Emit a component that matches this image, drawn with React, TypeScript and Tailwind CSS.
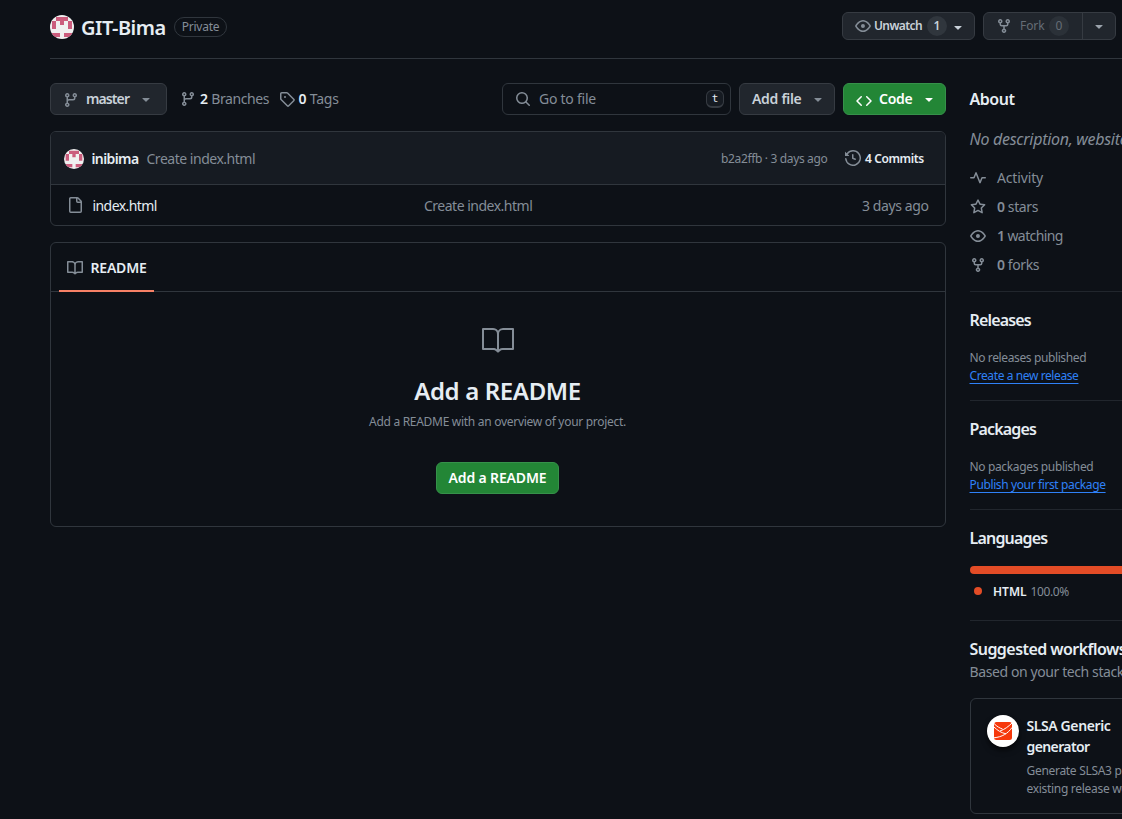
import React from "react";

const paths = {
  branch:
    "M9.5 3.25a2.25 2.25 0 1 1 3 2.122V6A2.5 2.5 0 0 1 10 8.5H6a1 1 0 0 0-1 1v1.128a2.251 2.251 0 1 1-1.5 0V5.372a2.25 2.25 0 1 1 1.5 0v1.836A2.493 2.493 0 0 1 6 7h4a1 1 0 0 0 1-1v-.628A2.25 2.25 0 0 1 9.5 3.25Zm-6 0a.75.75 0 1 0 1.5 0 .75.75 0 0 0-1.5 0Zm8.25-.75a.75.75 0 1 0 0 1.5.75.75 0 0 0 0-1.5ZM4.25 12a.75.75 0 1 0 0 1.5.75.75 0 0 0 0-1.5Z",
  tag: "M1 7.775V2.75C1 1.784 1.784 1 2.75 1h5.025c.464 0 .91.184 1.238.513l6.25 6.25a1.75 1.75 0 0 1 0 2.474l-5.026 5.026a1.75 1.75 0 0 1-2.474 0l-6.25-6.25A1.752 1.752 0 0 1 1 7.775Zm1.5 0c0 .066.026.13.073.177l6.25 6.25a.25.25 0 0 0 .354 0l5.025-5.025a.25.25 0 0 0 0-.354l-6.25-6.25a.25.25 0 0 0-.177-.073H2.75a.25.25 0 0 0-.25.25ZM6 5a1 1 0 1 1 0 2 1 1 0 0 1 0-2Z",
  search:
    "M10.68 11.74a6 6 0 0 1-7.922-8.982 6 6 0 0 1 8.982 7.922l3.04 3.04a.749.749 0 0 1-.326 1.275.749.749 0 0 1-.734-.215ZM11.5 7a4.499 4.499 0 1 0-8.997 0A4.499 4.499 0 0 0 11.5 7Z",
  code: "m11.28 3.22 4.25 4.25a.75.75 0 0 1 0 1.06l-4.25 4.25a.749.749 0 0 1-1.275-.326.749.749 0 0 1 .215-.734L13.94 8l-3.72-3.72a.749.749 0 0 1 .326-1.275.749.749 0 0 1 .734.215Zm-6.56 0a.751.751 0 0 1 1.042.018.751.751 0 0 1 .018 1.042L2.06 8l3.72 3.72a.749.749 0 0 1-.326 1.275.749.749 0 0 1-.734-.215L.47 8.53a.75.75 0 0 1 0-1.06Z",
  caret:
    "m4.427 7.427 3.396 3.396a.25.25 0 0 0 .354 0l3.396-3.396A.25.25 0 0 0 11.396 7H4.604a.25.25 0 0 0-.177.427Z",
  eye: "M8 2c1.981 0 3.671.992 4.933 2.078 1.27 1.091 2.187 2.345 2.637 3.023a1.62 1.62 0 0 1 0 1.798c-.45.678-1.367 1.932-2.637 3.023C11.67 13.008 9.981 14 8 14c-1.981 0-3.671-.992-4.933-2.078C1.797 10.83.88 9.576.43 8.898a1.62 1.62 0 0 1 0-1.798c.45-.677 1.367-1.931 2.637-3.022C4.33 2.992 6.019 2 8 2ZM1.679 7.932a.12.12 0 0 0 0 .136c.411.622 1.241 1.75 2.366 2.717C5.176 11.758 6.527 12.5 8 12.5c1.473 0 2.825-.742 3.955-1.715 1.124-.967 1.954-2.096 2.366-2.717a.12.12 0 0 0 0-.136c-.412-.621-1.242-1.75-2.366-2.717C10.824 4.242 9.473 3.5 8 3.5c-1.473 0-2.825.742-3.955 1.715-1.124.967-1.954 2.096-2.366 2.717ZM8 10a2 2 0 1 1-.001-3.999A2 2 0 0 1 8 10Z",
  fork: "M5 5.372v.878c0 .414.336.75.75.75h4.5a.75.75 0 0 0 .75-.75v-.878a2.25 2.25 0 1 1 1.5 0v.878a2.25 2.25 0 0 1-2.25 2.25h-1.5v2.128a2.251 2.251 0 1 1-1.5 0V8.5h-1.5A2.25 2.25 0 0 1 3.5 6.25v-.878a2.25 2.25 0 1 1 1.5 0ZM5 3.25a.75.75 0 1 0-1.5 0 .75.75 0 0 0 1.5 0Zm6.75.75a.75.75 0 1 0 0-1.5.75.75 0 0 0 0 1.5Zm-3 8.75a.75.75 0 1 0-1.5 0 .75.75 0 0 0 1.5 0Z",
  history:
    "m.427 1.927 1.215 1.215a8.002 8.002 0 1 1-1.6 5.685.75.75 0 1 1 1.493-.154 6.5 6.5 0 1 0 1.18-4.458l1.358 1.358A.25.25 0 0 1 3.896 6H.25A.25.25 0 0 1 0 5.75V2.104a.25.25 0 0 1 .427-.177ZM7.75 4a.75.75 0 0 1 .75.75v2.992l2.028.812a.75.75 0 0 1-.557 1.392l-2.5-1A.751.751 0 0 1 7 8.25v-3.5A.75.75 0 0 1 7.75 4Z",
  file: "M2 1.75C2 .784 2.784 0 3.75 0h6.586c.464 0 .909.184 1.237.513l2.914 2.914c.329.328.513.773.513 1.237v9.586A1.75 1.75 0 0 1 13.25 16h-9.5A1.75 1.75 0 0 1 2 14.25Zm1.75-.25a.25.25 0 0 0-.25.25v12.5c0 .138.112.25.25.25h9.5a.25.25 0 0 0 .25-.25V6h-2.75A1.75 1.75 0 0 1 9 4.25V1.5Zm6.75.062V4.25c0 .138.112.25.25.25h2.688l-.011-.013-2.914-2.914-.013-.011Z",
  book: "M0 1.75A.75.75 0 0 1 .75 1h4.253c1.227 0 2.317.59 3 1.501A3.743 3.743 0 0 1 11.006 1h4.245a.75.75 0 0 1 .75.75v10.5a.75.75 0 0 1-.75.75h-4.507a2.25 2.25 0 0 0-1.591.659l-.622.621a.75.75 0 0 1-1.06 0l-.622-.621A2.25 2.25 0 0 0 5.258 13H.75a.75.75 0 0 1-.75-.75Zm7.251 10.324.004-5.073-.002-2.253A2.25 2.25 0 0 0 5.003 2.5H1.5v9h3.757a3.75 3.75 0 0 1 1.994.574ZM8.755 4.75l-.004 7.322a3.752 3.752 0 0 1 1.992-.572H14.5v-9h-3.495a2.25 2.25 0 0 0-2.25 2.25Z",
  pulse:
    "M6 2c.306 0 .582.187.696.471L10 10.731l1.304-3.26A.751.751 0 0 1 12 7h3.25a.75.75 0 0 1 0 1.5h-2.742l-1.812 4.528a.751.751 0 0 1-1.392 0L6 4.77 4.696 8.03A.75.75 0 0 1 4 8.5H.75a.75.75 0 0 1 0-1.5h2.742l1.812-4.529A.751.751 0 0 1 6 2Z",
  star: "M8 .25a.75.75 0 0 1 .673.418l1.882 3.815 4.21.612a.75.75 0 0 1 .416 1.279l-3.046 2.97.719 4.192a.751.751 0 0 1-1.088.791L8 12.347l-3.766 1.98a.75.75 0 0 1-1.088-.79l.72-4.194L.818 6.374a.75.75 0 0 1 .416-1.28l4.21-.611L7.327.668A.75.75 0 0 1 8 .25Zm0 2.445L6.615 5.5a.75.75 0 0 1-.564.41l-3.097.45 2.24 2.184a.75.75 0 0 1 .216.664l-.528 3.084 2.769-1.456a.75.75 0 0 1 .698 0l2.77 1.456-.53-3.084a.75.75 0 0 1 .216-.664l2.24-2.183-3.096-.45a.75.75 0 0 1-.564-.41L8 2.694Z",
};

function Icon({ name, className = "", fill = "fill-[#848d97]" }: { name: keyof typeof paths; className?: string; fill?: string }) {
  return (
    <svg viewBox="0 0 16 16" className={`size-4 shrink-0 ${fill} ${className}`}>
      <path d={paths[name]} />
    </svg>
  );
}

function BigBook() {
  return (
    <svg viewBox="0 0 24 24" className="size-8 shrink-0 fill-[#848d97]">
      <path d="M0 3.75A.75.75 0 0 1 .75 3h7.497c1.566 0 2.945.8 3.751 2.014A4.495 4.495 0 0 1 15.75 3h7.5a.75.75 0 0 1 .75.75v15.063a.752.752 0 0 1-.755.75l-7.682-.052a3 3 0 0 0-2.142.878l-.89.891a.75.75 0 0 1-1.061 0l-.902-.901a2.996 2.996 0 0 0-2.121-.879H.75a.75.75 0 0 1-.75-.75Zm12.75 15.232a4.503 4.503 0 0 1 2.823-.971l6.927.047V4.5h-6.75a3 3 0 0 0-3 3ZM11.247 7.497a3 3 0 0 0-3-2.997H1.5V18h6.947c1.018 0 2.006.346 2.803.98Z" />
    </svg>
  );
}

function Avatar({ className }: { className: string }) {
  return (
    <svg viewBox="0 0 24 24" className={`shrink-0 rounded-full ${className}`}>
      <rect width="24" height="24" fill="#f0f0f0" />
      <path
        fill="#cb5d7d"
        d="M6 2h12v4h4v8h-4V6h-4v4h-4V6H6v8H2V6h4ZM2 18h8v4H2ZM14 18h8v4h-8Z"
      />
    </svg>
  );
}

function Heading({ children, className = "" }: { children: React.ReactNode; className?: string }) {
  return <h2 className={`text-base leading-6 font-semibold ${className}`}>{children}</h2>;
}

function Stat({ icon, value, label, className }: { icon: keyof typeof paths; value?: string; label: string; className: string }) {
  return (
    <li className={`flex h-[21px] items-center gap-[11.5px] text-sm text-[#848d97] ${className}`}>
      <Icon name={icon} className="mt-px" />
      <span>
        {value && <b className="font-semibold">{value} </b>}
        {label}
      </span>
    </li>
  );
}

const button = "flex shrink-0 items-center rounded-md border border-[#363b42] bg-[#21262d] text-[#c9d1d9] font-semibold";

export default function App() {
  return (
    <div className="h-[819px] w-[1122px] overflow-hidden bg-[#0d1117] pl-[50px] font-['Noto_Sans',sans-serif] whitespace-nowrap text-[#e6edf3]">
      <header className="flex h-[59px] items-center border-b border-[#30363d] pr-1.5 pb-[5px]">
        <Avatar className="size-6" />
        <h1 className="ml-[7px] w-[86px] pt-0.5 text-xl font-semibold tracking-[-0.5px]">GIT-Bima</h1>
        <span className="ml-[7px] flex h-5 w-[53px] items-center justify-center rounded-full border border-[#30363d] pt-px text-xs tracking-[-0.25px] text-[#848d97]">
          Private
        </span>
        <div className="mb-0.5 ml-auto flex h-7 text-xs">
          <button className={`${button} w-[133px] pl-3`}>
            <Icon name="eye" />
            <span className="ml-[3px] w-[49px] pt-px text-left tracking-[-0.6px]">Unwatch</span>
            <span className="ml-1 flex size-5 items-center justify-center rounded-full bg-[#30363d] pt-px">1</span>
            <Icon name="caret" fill="fill-[#c9d1d9]" className="mt-0.5 ml-[3px]" />
          </button>
          <div className={`${button} ml-2 w-[133px]`}>
            <span className="flex h-full w-[99px] items-center border-r border-[#363b42] pl-3 font-normal text-[#656d76]">
              <Icon name="fork" />
              <span className="ml-2 w-6 pt-px tracking-[-0.1px]">Fork</span>
              <span className="ml-[5px] flex size-5 items-center justify-center rounded-full bg-[#2b3138] pt-px">0</span>
            </span>
            <Icon name="caret" fill="fill-[#9ba3ac]" className="ml-2" />
          </div>
        </div>
      </header>

      <div className="flex">
        <main className="w-[896px] shrink-0 pt-6 text-sm">
          <div className="flex h-8 items-center">
            <button className={`${button} h-8 w-[117px] pl-3`}>
              <Icon name="branch" className="mt-px" />
              <span className="ml-[7px] w-[44px] text-left tracking-[-0.9px]">master</span>
              <Icon name="caret" className="ml-2" />
            </button>
            <Icon name="branch" className="ml-[13px]" />
            <span className="ml-1 w-[70px] tracking-[-0.4px] text-[#848d97]">
              <b className="font-semibold tracking-normal text-[#e6edf3]">2</b> Branches
            </span>
            <Icon name="tag" className="ml-[9px]" />
            <span className="ml-[3.5px] tracking-[-0.2px] text-[#848d97]">
              <b className="font-semibold text-[#e6edf3]">0</b> Tags
            </span>
            <div className="ml-auto flex h-8 w-[229px] items-center rounded-md border border-[#30363d] pr-1.5 pl-3 text-[#848d97]">
              <Icon name="search" />
              <span className="ml-2 tracking-[-0.25px]">Go to file</span>
              <kbd className="ml-auto flex h-[18px] w-[18px] items-center justify-center rounded-md border border-b-2 border-[#363b42] bg-[#161b22] font-['DejaVu_Sans_Mono',monospace] text-[11px] text-[#e6edf3]">
                t
              </kbd>
            </div>
            <button className={`${button} ml-2 h-8 w-24 pl-3`}>
              <span className="w-[50px] text-left tracking-[-0.3px]">Add file</span>
              <Icon name="caret" className="ml-2" />
            </button>
            <button className="ml-2 flex h-8 w-[103px] items-center rounded-md border border-[#36914a] bg-[#238636] pl-3 font-semibold text-white">
              <Icon name="code" fill="fill-white" className="mt-[3px]" />
              <span className="ml-[7px] w-[34px] text-left tracking-[-0.3px]">Code</span>
              <Icon name="caret" fill="fill-white" className="ml-2" />
            </button>
          </div>

          <section className="mt-4 overflow-hidden rounded-md border border-[#30363d]">
            <div className="flex h-[53px] items-center border-b border-[#30363d] bg-[#161b22] pt-0.5 pr-[21px] pl-[13px]">
              <Avatar className="size-5" />
              <b className="ml-[7.5px] w-[47.5px] font-semibold tracking-[-0.6px]">inibima</b>
              <span className="ml-[7.5px] tracking-[-0.48px] text-[#848d97]">Create index.html</span>
              <span className="ml-auto w-[107px] text-xs tracking-[-0.35px] text-[#848d97]">b2a2ffb · 3 days ago</span>
              <Icon name="history" className="mb-0.5 ml-[17px]" />
              <span className="ml-1 w-[59px] text-xs font-semibold tracking-[-0.4px]">4 Commits</span>
            </div>
            <div className="flex h-10 items-center pt-px pr-[16.5px] pl-4 text-[#848d97]">
              <Icon name="file" className="mb-0.5" />
              <span className="ml-[9px] w-[332px] pl-[0.5px] tracking-[-0.58px] text-[#e6edf3]">index.html</span>
              <span className="tracking-[-0.5px]">Create index.html</span>
              <span className="ml-auto tracking-[-0.4px]">3 days ago</span>
            </div>
          </section>

          <section className="mt-4 h-[285px] rounded-md border border-[#30363d]">
            <div className="h-[49px] border-b border-[#30363d] px-2">
              <div className="flex h-[49px] w-[95px] items-center border-b-2 border-[#f78166] pt-[3px] pl-2 font-semibold">
                <Icon name="book" />
                <span className="ml-[7.5px] tracking-[-0.2px]">README</span>
              </div>
            </div>
            <div className="flex flex-col items-center pt-8 pr-px">
              <BigBook />
              <h2 className="mt-[17px] text-2xl leading-9 font-semibold tracking-[-0.35px]">Add a README</h2>
              <p className="mt-1 text-xs leading-[18px] tracking-[-0.29px] text-[#848d97]">
                Add a README with an overview of your project.
              </p>
              <button className="mt-[31px] flex h-8 w-[123px] items-center justify-center rounded-md border border-[#36914a] bg-[#238636] font-semibold tracking-[-0.15px] text-white">
                Add a README
              </button>
            </div>
          </section>
        </main>

        <aside className="ml-[23.5px] w-[296px] shrink-0 pt-7">
          <section className="h-[205px] border-b border-[#21262d]">
            <Heading className="tracking-[-0.45px]">About</Heading>
            <p className="mt-4 text-base leading-6 tracking-[-0.3px] text-[#848d97] italic">
              No description, website, or topics provided.
            </p>
            <ul className="mt-4 flex flex-col gap-2">
              <Stat icon="pulse" label="Activity" className="tracking-[-0.15px]" />
              <Stat icon="star" value="0" label="stars" className="tracking-[-0.4px]" />
              <Stat icon="eye" value="1" label="watching" className="tracking-[-0.6px]" />
              <Stat icon="fork" value="0" label="forks" className="tracking-[-0.4px]" />
            </ul>
          </section>
          <section className="h-[109px] border-b border-[#21262d] pt-4 text-xs leading-[18px]">
            <Heading className="tracking-[-0.85px]">Releases</Heading>
            <p className="mt-[17px] tracking-[-0.38px] text-[#848d97]">No releases published</p>
            <a className="tracking-[-0.4px] text-[#2f81f7] underline underline-offset-3">Create a new release</a>
          </section>
          <section className="h-[109px] border-b border-[#21262d] pt-4 text-xs leading-[18px]">
            <Heading className="tracking-[-0.85px]">Packages</Heading>
            <p className="mt-[17px] tracking-[-0.35px] text-[#848d97]">No packages published</p>
            <a className="tracking-[-0.38px] text-[#2f81f7] underline underline-offset-3">Publish your first package</a>
          </section>
          <section className="h-[111px] border-b border-[#21262d] pt-4">
            <Heading className="tracking-[-0.8px]">Languages</Heading>
            <div className="mt-4 h-2 rounded-md bg-[#e34c26]" />
            <div className="mt-2 flex items-center pl-1 text-xs leading-[18px]">
              <i className="mb-px size-2 rounded-full bg-[#e34c26]" />
              <b className="ml-[11.5px] pt-px font-semibold">HTML</b>
              <span className="ml-1 pt-px tracking-[-0.4px] text-[#848d97]">100.0%</span>
            </div>
          </section>
          <section className="pt-4">
            <Heading className="tracking-[-0.55px]">Suggested workflows</Heading>
            <p className="text-sm leading-[21px] tracking-[-0.4px] text-[#848d97]">Based on your tech stack</p>
            <div className="mt-4 flex h-[116px] rounded-md border border-[#30363d] p-4">
              <span className="flex size-8 shrink-0 items-center justify-center rounded-full bg-white shadow-md shadow-black/60">
                <svg viewBox="0 0 18 18" className="size-[18px]">
                  <rect width="18" height="18" rx="2.5" fill="#f6380b" />
                  <path
                    d="M0 1.500C3 4.500 5.500 6 8.500 7M18 1C14.500 4.500 10.500 7.500 6 9M0 5C3.500 8.500 7.500 11 12 11.800M0 15.800C8 15 14 11.500 18 5.500"
                    fill="none"
                    stroke="#fff"
                    strokeWidth="1"
                  />
                </svg>
              </span>
              <div className="ml-2">
                <h3 className="text-sm leading-[21px] font-semibold">
                  <span className="tracking-[-0.4px]">SLSA Generic</span>
                  <br />
                  <span className="tracking-[-0.6px]">generator</span>
                </h3>
                <p className="mt-[5px] text-xs leading-[18px] tracking-[-0.3px] text-[#848d97]">
                  Generate SLSA3 provenance for your
                  <br />
                  existing release workflows
                </p>
              </div>
            </div>
          </section>
        </aside>
      </div>
    </div>
  );
}
